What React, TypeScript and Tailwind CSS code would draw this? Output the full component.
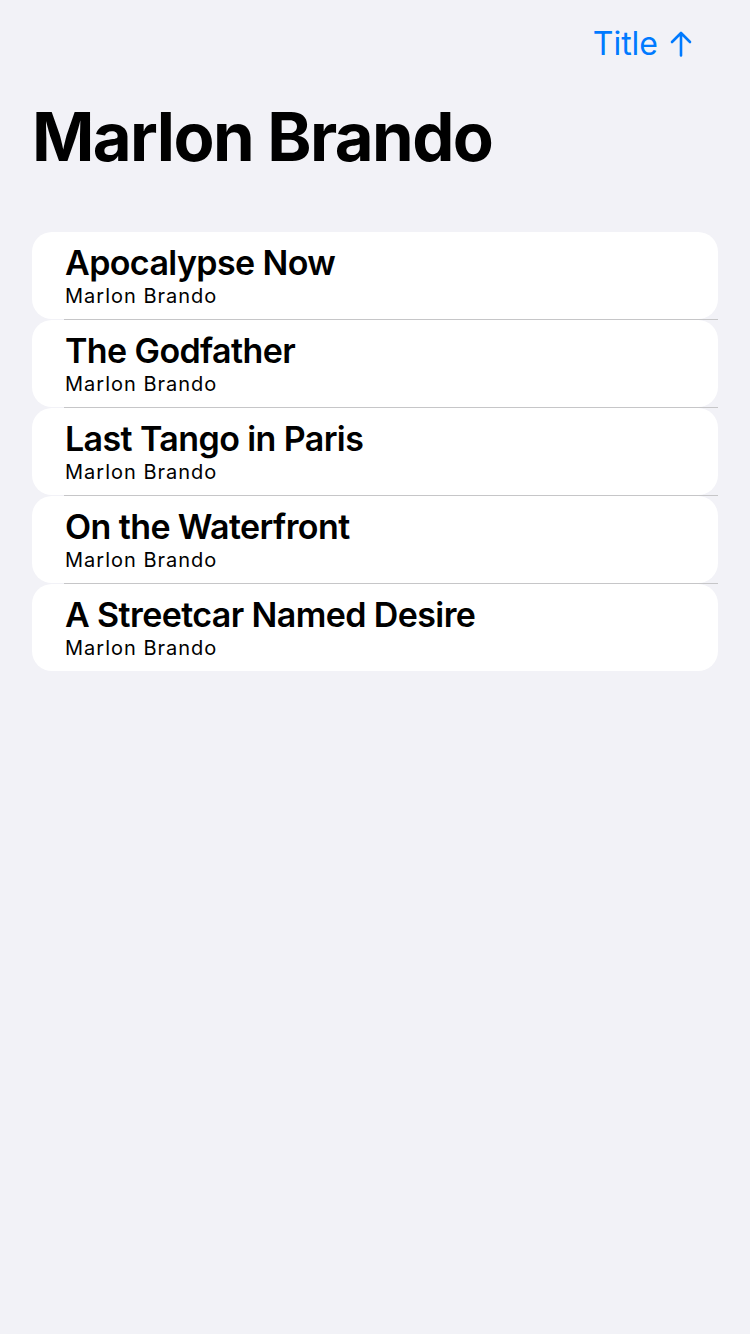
const movies = [
  "Apocalypse Now",
  "The Godfather",
  "Last Tango in Paris",
  "On the Waterfront",
  "A Streetcar Named Desire",
];

function ArrowUp() {
  return (
    <svg width="22" height="26" viewBox="0 0 22 26" fill="none" aria-hidden>
      <path
        d="M11 24.5V2M2 11l9-9 9 9"
        stroke="currentColor"
        strokeWidth="2.6"
        strokeLinecap="round"
        strokeLinejoin="round"
      />
    </svg>
  );
}

export default function App() {
  return (
    <div
      className="min-h-screen bg-[#f2f2f7] text-black"
      style={{ fontFamily: "Inter, 'Noto Sans', sans-serif" }}
    >
      <div className="flex justify-end pr-[58px] pt-[24px]">
        <button
          type="button"
          className="flex h-[40px] items-center gap-[12px] text-[32px] leading-[40px] text-[#007aff]"
        >
          Title
          <ArrowUp />
        </button>
      </div>

      <h1 className="mt-[33px] pl-[32px] text-[67px] font-bold leading-[80px] tracking-[-1.6px]">
        Marlon Brando
      </h1>

      <ul className="mx-[32px] mt-[55px]">
        {movies.map((m, i) => (
          <li key={m}>
            <div className="h-[87px] rounded-[20px] bg-white px-[33px] pt-[12px]">
              <div className="text-[34px] font-semibold leading-[38px] tracking-[-0.6px]">
                {m}
              </div>
              <div className="mt-[1px] text-[20px] leading-[26px] tracking-[1px]">
                Marlon Brando
              </div>
            </div>
            {i < movies.length - 1 && (
              <div className="ml-[32px] h-px bg-[#c6c6c8]" />
            )}
          </li>
        ))}
      </ul>
    </div>
  );
}
